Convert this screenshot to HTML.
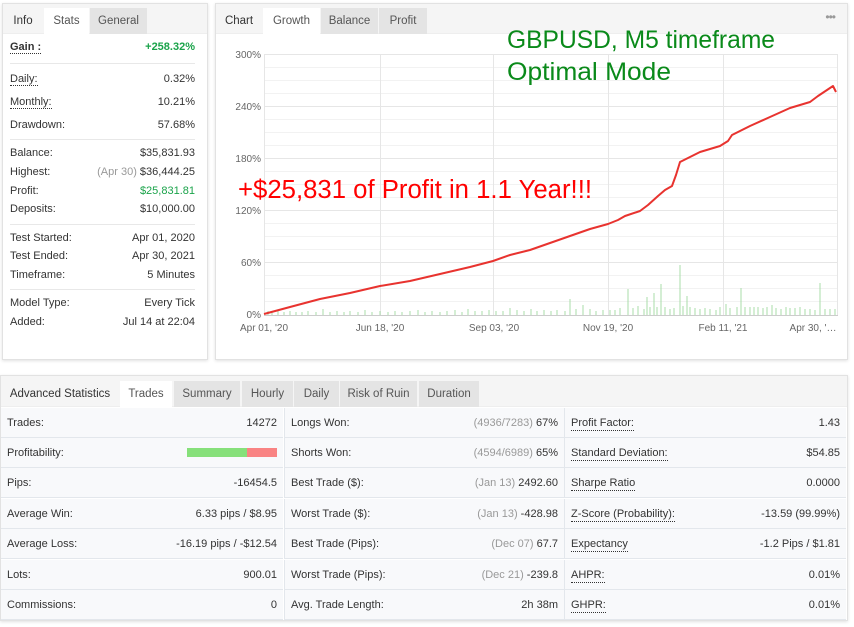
<!DOCTYPE html>
<html><head><meta charset="utf-8"><style>
*{box-sizing:border-box;margin:0;padding:0}
body{width:854px;height:627px;background:#fff;font-family:"Liberation Sans",sans-serif;font-size:11px;color:#333;position:relative;overflow:hidden}
.panel{position:absolute;background:#fff;border:1px solid #e2e2e2;box-shadow:0 1px 3px rgba(0,0,0,.12)}
.tabs{position:absolute;left:0;top:0;right:0;height:30px;background:#f5f5f5;border-bottom:1px solid #eee}
.tab{position:absolute;top:4px;height:26px;line-height:26px;text-align:center;background:#e4e4e4;color:#555;font-size:11.5px}
.tab.act{background:#fff;color:#555}
.tab.lbl{background:none;color:#333}
.r{position:absolute;left:7px;right:12px;height:16px;line-height:16px}
.r .v{position:absolute;right:0;top:0}
.dot{border-bottom:1px dotted #333}
.hr{position:absolute;left:7px;right:12px;height:1px;background:#e8e8e8}
.g{color:#1aa34a}
.gr{color:#999}
.cell{position:absolute;height:30px;line-height:30px;background:#f8f9fb;border-bottom:1px solid #e3e7ec;padding:0 6px;font-size:11px}
.cell .v{position:absolute;right:6px;top:0}
.cell span.dot{border-bottom:1px dotted #333;line-height:13px;display:inline-block}
</style></head><body>

<div class="panel" style="left:2px;top:3px;width:206px;height:357px">
 <div class="tabs">
  <div class="tab lbl" style="left:0;width:40px">Info</div>
  <div class="tab act" style="left:41px;width:45px">Stats</div>
  <div class="tab" style="left:87px;width:57px">General</div>
 </div>
 <div class="r" style="top:35px"><b class="dot" style="font-weight:bold">Gain :</b><span class="v g" style="font-weight:bold">+258.32%</span></div>
 <div class="hr" style="top:59px"></div>
 <div class="r" style="top:67px"><span class="dot">Daily:</span><span class="v">0.32%</span></div>
 <div class="r" style="top:90px"><span class="dot">Monthly:</span><span class="v">10.21%</span></div>
 <div class="r" style="top:113px">Drawdown:<span class="v">57.68%</span></div>
 <div class="hr" style="top:135px"></div>
 <div class="r" style="top:141px">Balance:<span class="v">$35,831.93</span></div>
 <div class="r" style="top:160px">Highest:<span class="v"><span class="gr">(Apr 30)</span> $36,444.25</span></div>
 <div class="r" style="top:179px">Profit:<span class="v g">$25,831.81</span></div>
 <div class="r" style="top:197px">Deposits:<span class="v">$10,000.00</span></div>
 <div class="hr" style="top:220px"></div>
 <div class="r" style="top:226px">Test Started:<span class="v">Apr 01, 2020</span></div>
 <div class="r" style="top:244px">Test Ended:<span class="v">Apr 30, 2021</span></div>
 <div class="r" style="top:263px">Timeframe:<span class="v">5 Minutes</span></div>
 <div class="hr" style="top:285px"></div>
 <div class="r" style="top:291px">Model Type:<span class="v">Every Tick</span></div>
 <div class="r" style="top:310px">Added:<span class="v">Jul 14 at 22:04</span></div>
</div>

<div class="panel" style="left:215px;top:3px;width:633px;height:357px">
 <div class="tabs">
  <div class="tab lbl" style="left:0;width:46px">Chart</div>
  <div class="tab act" style="left:47px;width:57px">Growth</div>
  <div class="tab" style="left:105px;width:57px">Balance</div>
  <div class="tab" style="left:163px;width:48px">Profit</div>
  <div style="position:absolute;right:12px;top:6px;color:#999;font-size:12px;letter-spacing:-1px">•••</div>
 </div>
</div>

<svg style="position:absolute;left:0;top:0" width="854" height="360">
 <g stroke="#f2f2f2" stroke-width="1">
  <line x1="264" y1="67.5" x2="838" y2="67.5"/><line x1="264" y1="80.5" x2="838" y2="80.5"/><line x1="264" y1="93.5" x2="838" y2="93.5"/>
  <line x1="264" y1="119.5" x2="838" y2="119.5"/><line x1="264" y1="132.5" x2="838" y2="132.5"/><line x1="264" y1="145.5" x2="838" y2="145.5"/>
  <line x1="264" y1="171.5" x2="838" y2="171.5"/><line x1="264" y1="184.5" x2="838" y2="184.5"/><line x1="264" y1="197.5" x2="838" y2="197.5"/>
  <line x1="264" y1="223.5" x2="838" y2="223.5"/><line x1="264" y1="236.5" x2="838" y2="236.5"/><line x1="264" y1="249.5" x2="838" y2="249.5"/>
  <line x1="264" y1="275.5" x2="838" y2="275.5"/><line x1="264" y1="288.5" x2="838" y2="288.5"/><line x1="264" y1="301.5" x2="838" y2="301.5"/>
 </g>
 <g stroke="#e6e6e6" stroke-width="1">
  <line x1="264" y1="54.5" x2="838" y2="54.5"/><line x1="264" y1="106.5" x2="838" y2="106.5"/><line x1="264" y1="158.5" x2="838" y2="158.5"/>
  <line x1="264" y1="210.5" x2="838" y2="210.5"/><line x1="264" y1="262.5" x2="838" y2="262.5"/>
  <line x1="264.5" y1="54" x2="264.5" y2="315"/><line x1="380.5" y1="54" x2="380.5" y2="315"/><line x1="493.5" y1="54" x2="493.5" y2="315"/>
  <line x1="608.5" y1="54" x2="608.5" y2="315"/><line x1="723.5" y1="54" x2="723.5" y2="315"/><line x1="837.5" y1="54" x2="837.5" y2="315"/>
 </g>
 <line x1="264" y1="315.5" x2="838" y2="315.5" stroke="#ccc"/>
 <g fill="#666" font-size="10" font-family="Liberation Sans" text-anchor="end">
  <text x="261" y="58">300%</text><text x="261" y="110">240%</text><text x="261" y="162">180%</text>
  <text x="261" y="214">120%</text><text x="261" y="266">60%</text><text x="261" y="318">0%</text>
 </g>
 <g fill="#666" font-size="10" font-family="Liberation Sans" text-anchor="middle">
  <text x="264" y="331">Apr 01, '20</text><text x="380" y="331">Jun 18, '20</text><text x="494" y="331">Sep 03, '20</text>
  <text x="608" y="331">Nov 19, '20</text><text x="723" y="331">Feb 11, '21</text><text x="813" y="331">Apr 30, '…</text>
 </g>
 <g stroke="#a8dca8" stroke-width="1">
  <path d="M268 315v-4M272 315v-3M278 315v-4M284 315v-3M290 315v-4M296 315v-3M302 315v-3M308 315v-4M316 315v-3M323 315v-6M330 315v-3M337 315v-4M344 315v-3M350 315v-4M358 315v-3M365 315v-5M372 315v-3M380 315v-4M388 315v-3M395 315v-4M402 315v-3M410 315v-4M418 315v-5M425 315v-3M432 315v-4M440 315v-3M447 315v-4M455 315v-5M462 315v-3M468 315v-6M475 315v-4M482 315v-4M489 315v-5M496 315v-4M503 315v-4M510 315v-7M517 315v-5M524 315v-4M531 315v-6M537 315v-4M544 315v-5M551 315v-4M557 315v-5M565 315v-4M570 315v-16M576 315v-6M583 315v-10M590 315v-6M596 315v-4M603 315v-5M610 315v-5M615 315v-5M620 315v-7M628 315v-26M633 315v-7M638 315v-9M644 315v-6M647 315v-18M650 315v-8M654 315v-22M657 315v-8M661 315v-31M665 315v-8M670 315v-6M674 315v-7M680 315v-50M683 315v-9M687 315v-19M690 315v-8M695 315v-7M700 315v-6M705 315v-7M710 315v-6M716 315v-5M720 315v-8M726 315v-11M730 315v-7M737 315v-8M741 315v-27M745 315v-8M750 315v-8M754 315v-8M758 315v-8M763 315v-7M767 315v-8M772 315v-10M776 315v-7M781 315v-6M786 315v-8M790 315v-7M795 315v-7M800 315v-8M805 315v-6M810 315v-6M815 315v-5M820 315v-32M825 315v-6M830 315v-6M835 315v-6"/>
 </g>
 <polyline fill="none" stroke="#e8332f" stroke-width="2" stroke-linejoin="round" points="264,314 290,307 320,299 350,293 380,286 410,281 440,274 470,267 493,261 510,255 530,250 550,243 570,236 590,229 608,224 618,220 625,216 640,211 648,205 658,196 665,190 672,186 676,175 680,162 690,157 700,152 720,146 728,141 732,135 750,126 770,117 790,108 810,102 818,96 830,88 833,86 836,92"/>
 <text x="238" y="198" fill="#ff0000" font-size="25.5" font-family="Liberation Sans" textLength="354" lengthAdjust="spacingAndGlyphs">+$25,831 of Profit in 1.1 Year!!!</text>
 <text x="507" y="48" fill="#0a8a1a" font-size="25" font-family="Liberation Sans" textLength="268" lengthAdjust="spacingAndGlyphs">GBPUSD, M5 timeframe</text>
 <text x="507" y="80" fill="#0a8a1a" font-size="25" font-family="Liberation Sans" textLength="164" lengthAdjust="spacingAndGlyphs">Optimal Mode</text>
</svg>

<div class="panel" style="left:0;top:375px;width:848px;height:246px">
 <div class="tabs" style="height:31px">
  <div class="tab lbl" style="left:0;top:5px;width:118px">Advanced Statistics</div>
  <div class="tab act" style="left:119px;top:5px;width:52px">Trades</div>
  <div class="tab" style="left:173px;top:5px;width:66px">Summary</div>
  <div class="tab" style="left:241px;top:5px;width:51px">Hourly</div>
  <div class="tab" style="left:293px;top:5px;width:45px">Daily</div>
  <div class="tab" style="left:339px;top:5px;width:77px">Risk of Ruin</div>
  <div class="tab" style="left:418px;top:5px;width:60px">Duration</div>
 </div>
</div>

<div style="position:absolute;left:1px;top:408px;width:845px;height:212px">
 <!-- col1 -->
 <div class="cell" style="left:0;top:0;width:282px">Trades:<span class="v">14272</span></div>
 <div class="cell" style="left:0;top:30px;width:282px">Profitability:<span style="position:absolute;left:186px;top:10px;width:60px;height:9px;background:#86e07a"></span><span style="position:absolute;left:246px;top:10px;width:30px;height:9px;background:#f98383"></span></div>
 <div class="cell" style="left:0;top:60px;width:282px">Pips:<span class="v">-16454.5</span></div>
 <div class="cell" style="left:0;top:91px;width:282px">Average Win:<span class="v">6.33 pips / $8.95</span></div>
 <div class="cell" style="left:0;top:121px;width:282px">Average Loss:<span class="v">-16.19 pips / -$12.54</span></div>
 <div class="cell" style="left:0;top:152px;width:282px">Lots:<span class="v">900.01</span></div>
 <div class="cell" style="left:0;top:182px;width:282px">Commissions:<span class="v">0</span></div>
 <!-- col2 -->
 <div class="cell" style="left:283px;top:0;width:280px;border-left:1px solid #e3e7ec">Longs Won:<span class="v"><span class="gr">(4936/7283)</span> 67%</span></div>
 <div class="cell" style="left:283px;top:30px;width:280px;border-left:1px solid #e3e7ec">Shorts Won:<span class="v"><span class="gr">(4594/6989)</span> 65%</span></div>
 <div class="cell" style="left:283px;top:60px;width:280px;border-left:1px solid #e3e7ec">Best Trade ($):<span class="v"><span class="gr">(Jan 13)</span> 2492.60</span></div>
 <div class="cell" style="left:283px;top:91px;width:280px;border-left:1px solid #e3e7ec">Worst Trade ($):<span class="v"><span class="gr">(Jan 13)</span> -428.98</span></div>
 <div class="cell" style="left:283px;top:121px;width:280px;border-left:1px solid #e3e7ec">Best Trade (Pips):<span class="v"><span class="gr">(Dec 07)</span> 67.7</span></div>
 <div class="cell" style="left:283px;top:152px;width:280px;border-left:1px solid #e3e7ec">Worst Trade (Pips):<span class="v"><span class="gr">(Dec 21)</span> -239.8</span></div>
 <div class="cell" style="left:283px;top:182px;width:280px;border-left:1px solid #e3e7ec">Avg. Trade Length:<span class="v">2h 38m</span></div>
 <!-- col3 -->
 <div class="cell" style="left:563px;top:0;width:282px;border-left:1px solid #e3e7ec"><span class="dot">Profit Factor:</span><span class="v">1.43</span></div>
 <div class="cell" style="left:563px;top:30px;width:282px;border-left:1px solid #e3e7ec"><span class="dot">Standard Deviation:</span><span class="v">$54.85</span></div>
 <div class="cell" style="left:563px;top:60px;width:282px;border-left:1px solid #e3e7ec"><span class="dot">Sharpe Ratio</span><span class="v">0.0000</span></div>
 <div class="cell" style="left:563px;top:91px;width:282px;border-left:1px solid #e3e7ec"><span class="dot">Z-Score (Probability):</span><span class="v">-13.59 (99.99%)</span></div>
 <div class="cell" style="left:563px;top:121px;width:282px;border-left:1px solid #e3e7ec"><span class="dot">Expectancy</span><span class="v">-1.2 Pips / $1.81</span></div>
 <div class="cell" style="left:563px;top:152px;width:282px;border-left:1px solid #e3e7ec"><span class="dot">AHPR:</span><span class="v">0.01%</span></div>
 <div class="cell" style="left:563px;top:182px;width:282px;border-left:1px solid #e3e7ec"><span class="dot">GHPR:</span><span class="v">0.01%</span></div>
</div>
</body></html>
